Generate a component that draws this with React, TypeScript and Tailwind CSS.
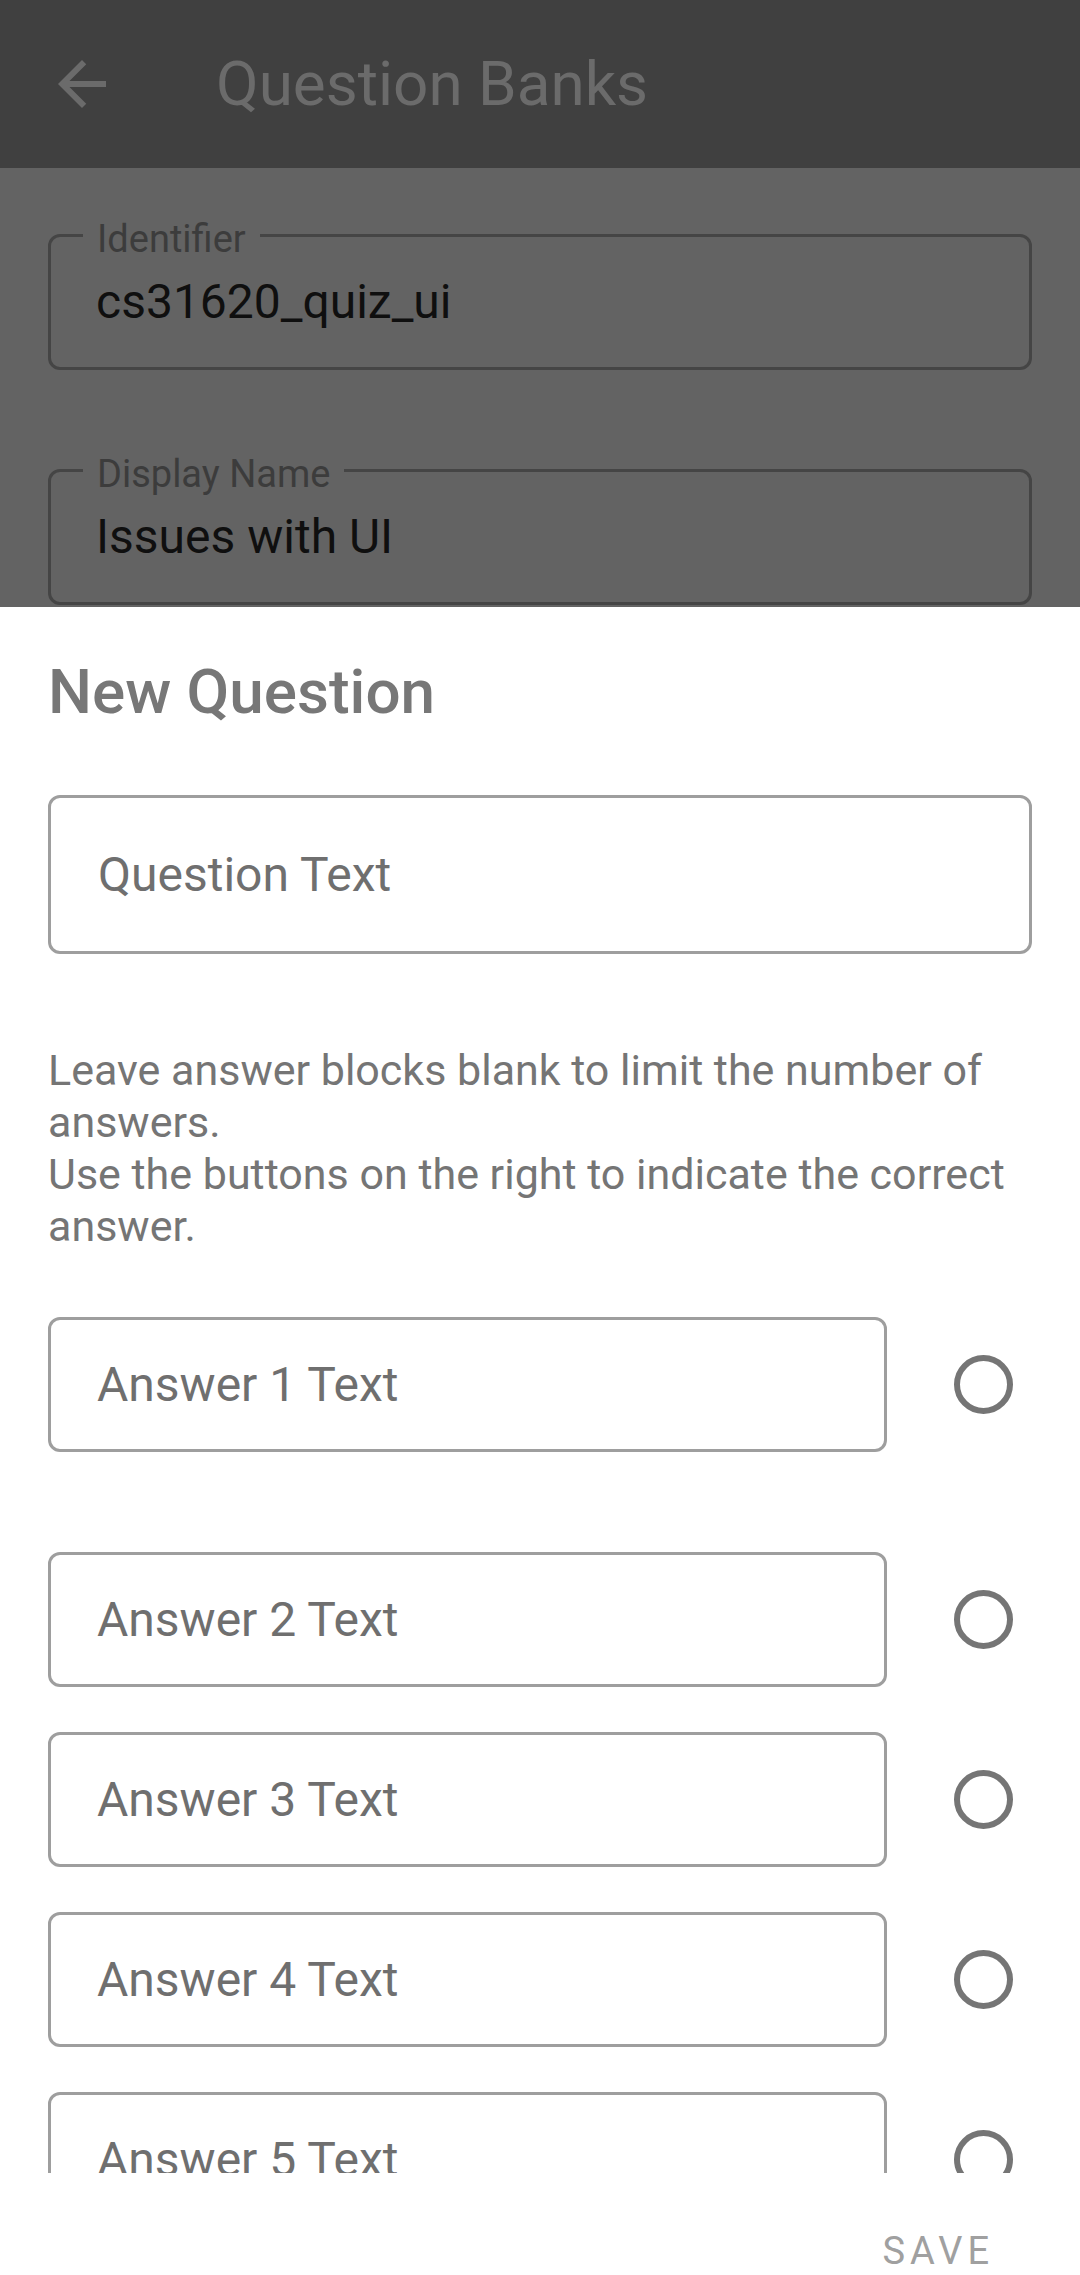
import React from "react";

const answers = ["Answer 1 Text", "Answer 2 Text", "Answer 3 Text", "Answer 4 Text", "Answer 5 Text"];

function DimField({ label, value }: { label: string; value: string }) {
    return (
        <div className="relative flex h-[136px] items-center rounded-[12px] border-[3px] border-[#454545] pl-[45px]">
            <span className="absolute left-[32px] top-[-17px] bg-[#636363] px-[14px] text-[38px] leading-none text-[#3c3c3c]">
                {label}
            </span>
            <span className="text-[48px] leading-none text-[#0f0f0f]">{value}</span>
        </div>
    );
}

export default function App() {
    return (
        <div
            className="flex h-[2275px] w-[1080px] flex-col overflow-hidden bg-white"
            style={{ fontFamily: "Roboto, 'Noto Sans', sans-serif" }}
        >
            {/* toolbar, dimmed by the sheet */}
            <div className="flex h-[168px] shrink-0 items-center bg-[#404040] pl-[46px]">
                <svg width="72" height="72" viewBox="0 0 24 24" className="text-[#6b6b6b]" fill="currentColor">
                    <path d="M20 11H7.83l5.59-5.59L12 4l-8 8 8 8 1.41-1.41L7.83 13H20v-2z" />
                </svg>
                <h1 className="ml-[98px] text-[62px] leading-none text-[#6b6b6b]">Question Banks</h1>
            </div>

            {/* page behind the sheet */}
            <div className="flex h-[439px] shrink-0 flex-col bg-[#636363] px-[48px] pt-[66px]">
                <DimField label="Identifier" value="cs31620_quiz_ui" />
                <div className="mt-[99px]">
                    <DimField label="Display Name" value="Issues with UI" />
                </div>
            </div>

            {/* bottom sheet */}
            <div className="flex flex-1 flex-col bg-white">
                <div className="h-[1566px] overflow-hidden px-[48px] pt-[54px]">
                    <h2 className="text-[62px] font-medium leading-none text-[#777777]">New Question</h2>

                    <div className="mt-[72px] flex h-[159px] items-center rounded-[12px] border-[3px] border-[#9e9e9e] pl-[47px]">
                        <span className="text-[48px] leading-none text-[#6f6f6f]">Question Text</span>
                    </div>

                    <p className="mt-[90px] text-[43px] leading-[52px] text-[#757575]">
                        Leave answer blocks blank to limit the number of answers.
                        <br />
                        Use the buttons on the right to indicate the correct answer.
                    </p>

                    <div className="mt-[65px] flex flex-col gap-[45px]">
                        {answers.map((a, i) => (
                            <div key={a} className={`flex items-center ${i === 1 ? "mt-[55px]" : ""}`}>
                                <div className="flex h-[135px] w-[839px] shrink-0 items-center rounded-[12px] border-[3px] border-[#9e9e9e] pl-[46px]">
                                    <span className="text-[48px] leading-none text-[#6f6f6f]">{a}</span>
                                </div>
                                <div className="ml-[67px] h-[59px] w-[59px] rounded-full border-[6px] border-[#757575]" />
                            </div>
                        ))}
                    </div>
                </div>

                <div className="flex flex-1 justify-end pr-[86px] pt-[53px]">
                    <button className="text-[38px] uppercase leading-none tracking-[5px] text-[#a0a0a0]">
                        Save
                    </button>
                </div>
            </div>
        </div>
    );
}
